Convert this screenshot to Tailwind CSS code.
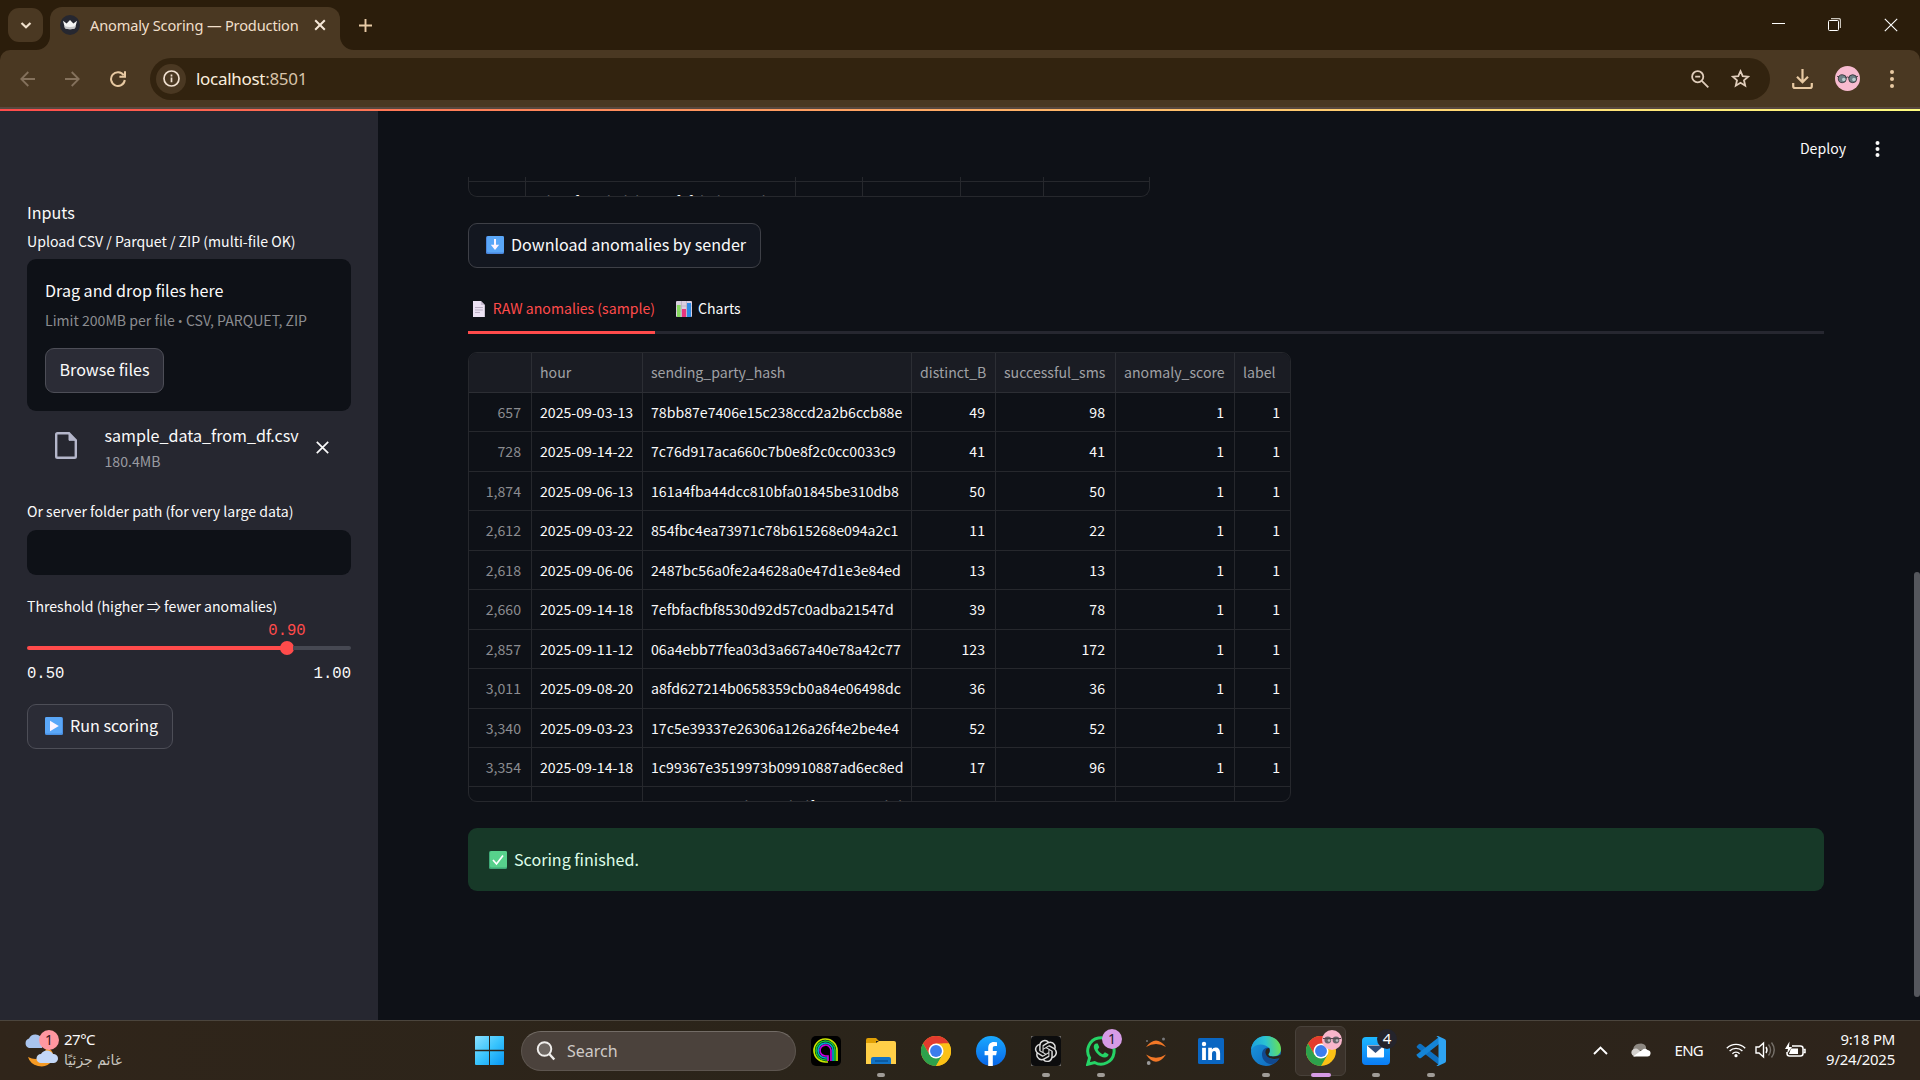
<!DOCTYPE html>
<html lang="en">
<head>
<meta charset="utf-8">
<title>Anomaly Scoring — Production</title>
<script src="https://cdn.jsdelivr.net/npm/@tailwindcss/browser@4"></script>
</head>
<body class="flex h-[1080px] w-[1920px] flex-col overflow-hidden bg-[#0e1117] font-['Noto_Sans_CJK_SC',sans-serif] whitespace-nowrap text-[#fafafa]">

<!-- Tab strip -->
<header class="flex h-[50px] shrink-0 bg-[#2b1d0b] pl-2 font-['Noto_Sans',sans-serif]">
  <div class="mt-2 flex h-[34px] w-[35px] items-center justify-center rounded-[11px] bg-[#4a3822]">
    <svg class="size-3" viewBox="0 0 12 12" fill="none" stroke="#f0e0cc" stroke-width="2.2"><path d="M1.5 4l4.5 4.300l4.500-4.300"/></svg>
  </div>
  <div class="relative mt-[7px] ml-[7px] flex h-[43px] w-[290px] items-center rounded-t-[12px] bg-[#4a3822] pb-[7px] pl-[10px]">
    <svg class="absolute bottom-0 -left-[14px] size-[14px]" viewBox="0 0 14 14"><path d="M14 0v14H0A14 14 0 0 0 14 0" fill="#4a3822"/></svg>
    <svg class="absolute -right-[14px] bottom-0 size-[14px]" viewBox="0 0 14 14"><path d="M0 0v14h14A14 14 0 0 1 0 0" fill="#4a3822"/></svg>
    <svg class="size-5" viewBox="0 0 20 20"><circle cx="10" cy="10" r="10" fill="#262730"/><path d="M3 5.800l3.600 2.700L10 5l3.400 3.500L17 5.800l-2 7.400q-5 2-10 0z" fill="#f4f4f4"/><path d="M4.300 11q5.700 2 11.400 0l-.7 2.200q-5 2-10 0z" fill="#c4c4c6"/></svg>
    <span class="mt-px ml-[10px] text-[14.600px] tracking-[-0.16px] text-[#f0dfca]">Anomaly Scoring — Production</span>
    <svg class="absolute top-3 right-[14px] size-3" viewBox="0 0 12 12" stroke="#f6e8d8" stroke-width="2"><path d="M1.200 1.200l9.600 9.600M10.800 1.200l-9.600 9.600"/></svg>
  </div>
  <svg class="mt-[19px] ml-[19px] size-[13px]" viewBox="0 0 13 13" stroke="#e8cba6" stroke-width="1.900"><path d="M6.500 0v13M0 6.500h13"/></svg>
  <div class="ml-auto flex items-start gap-[43px] pt-[18px] pr-[22px]">
    <svg class="h-[13px] w-[13px]" viewBox="0 0 13 13" stroke="#fff"><path d="M0 5.500h13"/></svg>
    <svg class="size-[13px]" viewBox="0 0 13 13" fill="none" stroke="#fff"><rect x=".5" y="2.500" width="10" height="10" rx="1"/><path d="M3 .5h7.500q2 0 2 2V10" stroke="#c9c3ba" stroke-width="1.300"/></svg>
    <svg class="size-[14px]" viewBox="0 0 14 14" stroke="#fff" stroke-width="1.100"><path d="M.8.8l12.400 12.400M13.200.8L.8 13.200"/></svg>
  </div>
</header>

<!-- Address bar -->
<div class="shrink-0 bg-[#2b1d0b]">
<nav class="flex h-[57px] items-center rounded-t-[10px] bg-[#4a3822] font-['Noto_Sans',sans-serif]">
  <svg class="ml-5 h-[16px] w-[15px]" viewBox="0 0 15 16" fill="none" stroke="#84715c" stroke-width="1.800"><path d="M15 8H1.500M8.300 1L1.300 8l7 7"/></svg>
  <svg class="ml-[30px] h-[16px] w-[15px]" viewBox="0 0 15 16" fill="none" stroke="#84715c" stroke-width="1.800"><path d="M0 8h13.500M6.700 1l7 7-7 7"/></svg>
  <svg class="ml-[30px] size-4" viewBox="0 0 16 16" fill="none" stroke="#e8c9a2" stroke-width="2"><path d="M13.700 4.200A6.900 6.900 0 1 0 14.800 9M15 .2v5.600H9.400"/></svg>
  <div class="ml-6 flex h-[42px] w-[1620px] items-center rounded-full bg-[#32230f] pl-[6px]">
    <div class="flex size-[30px] items-center justify-center rounded-full bg-[#4a3822]">
      <svg class="size-[17px]" viewBox="0 0 17 17" fill="none" stroke="#f0e0d0" stroke-width="1.700"><circle cx="8.500" cy="8.500" r="7.500"/><path d="M8.500 7.600v4.700M8.500 4.600v1.800"/></svg>
    </div>
    <span class="mt-px ml-[10px] text-[17px] tracking-[-0.3px] text-[#d8c3aa]"><span class="text-[#fbeede]">localhost</span>:8501</span>
    <svg class="ml-auto size-[18px]" viewBox="0 0 18 18" fill="none" stroke="#e0cdbb" stroke-width="1.800"><circle cx="6.700" cy="6.700" r="5.600"/><path d="M10.800 10.800l6.500 6.500M4.200 6.700h5"/></svg>
    <svg class="mr-[20px] ml-[22px] size-[19px]" viewBox="0 0 19 19" fill="none" stroke="#e0cdbb" stroke-width="1.800"><path d="M9.500 2.200l2.200 5 5.400.5-4.100 3.600 1.200 5.400-4.700-2.900-4.700 2.900L6 11.300 1.900 7.700l5.400-.5z"/></svg>
  </div>
  <svg class="ml-[22px] h-[22px] w-[21px]" viewBox="0 0 21 22" fill="none" stroke="#e8c9a2" stroke-width="2.200"><path d="M10.500 1v13M5 8.800l5.500 5.500L16 8.800M1.200 15v3.300q0 1.700 1.700 1.700h15.200q1.700 0 1.700-1.700V15"/></svg>
  <svg class="ml-[22px] size-[25px]" viewBox="0 0 25 25"><circle cx="12.500" cy="12.500" r="12.500" fill="#f8bbd0"/><g stroke="#2a2a2e" stroke-width=".8"><circle cx="7.300" cy="12.700" r="4" fill="#6f7f86"/><circle cx="17.700" cy="12.700" r="4" fill="#6f7f86"/><path d="M2 10.300l2 .6M23 10.300l-2 .6M11 11.500q1.500-1 3 0" fill="none"/></g><circle cx="8.800" cy="13.500" r="1.800" fill="#b9cccd"/><circle cx="19" cy="13.500" r="1.800" fill="#b9cccd"/></svg>
  <svg class="ml-[30px] h-[18px] w-1" viewBox="0 0 4 18" fill="#e8c9a2"><circle cx="2" cy="2" r="2"/><circle cx="2" cy="9" r="2"/><circle cx="2" cy="16" r="2"/></svg>
</nav>
</div>
<div class="h-[2px] shrink-0 bg-[#58483f]"></div>
<div class="h-[2px] shrink-0 bg-linear-to-r from-[#ff4b4b] to-[#fffd80]"></div>

<div class="flex h-[909px] shrink-0">
  <!-- Sidebar -->
  <aside class="w-[378px] shrink-0 bg-[#262730] px-[27px] pt-[87px]">
    <div class="h-[28px] text-[16.100px] leading-[28px]">Inputs</div>
    <div class="mt-[3px] h-[25px] text-[14.100px] leading-[25px]">Upload CSV / Parquet / ZIP (multi-file OK)</div>
    <div class="mt-[5px] h-[152px] rounded-[9px] bg-[#0e1117] px-[18px] pt-[18px]">
      <div class="h-[27px] text-[16.100px] leading-[27px]">Drag and drop files here</div>
      <div class="mt-[3px] h-[26px] text-[14.100px] leading-[26px] text-[#8b8c90]">Limit 200MB per file <span class="font-['Open_Sans',sans-serif] text-[13px]">•</span> CSV, PARQUET, ZIP</div>
      <div class="mt-[15px] flex h-[45px] w-[119px] items-center justify-center rounded-[9px] border border-[#4d4e57] bg-[#2b2c36] pb-[2px] text-[16.100px]">Browse files</div>
    </div>
    <div class="flex h-[66px] items-start pt-[11px] pl-[28px]">
      <svg class="mt-[10px] h-[27px] w-[22px]" viewBox="0 0 22 27" fill="none" stroke="#b4b6ca" stroke-width="2.400"><path d="M3 1.200h11l6.800 7v16.300q0 1.300-1.300 1.300H2.500q-1.300 0-1.300-1.300V2.500q0-1.300 1.300-1.300z"/><path d="M14 1.500v6.800h6.500z" fill="#b4b6ca" stroke-width="1"/></svg>
      <div class="ml-[27.500px] w-[195.500px]">
        <div class="h-[27px] text-[16.100px] leading-[27px]">sample_data_from_df.csv</div>
        <div class="h-[25px] text-[14.100px] leading-[25px] text-[#9a9ba1]">180.4MB</div>
      </div>
      <svg class="mt-[19px] ml-[16px] size-[13px]" viewBox="0 0 13 13" stroke="#fafafa" stroke-width="1.700"><path d="M.8.8l11.400 11.400M12.200.8L.8 12.200"/></svg>
    </div>
    <div class="mt-[22px] h-[25px] text-[14.100px] leading-[25px]">Or server folder path (for very large data)</div>
    <div class="mt-[6px] h-[45px] rounded-[9px] bg-[#0e1117]"></div>
    <div class="mt-[19px] h-[25px] text-[14.100px] leading-[25px]">Threshold (higher ⇒ fewer anomalies)</div>
    <div class="mt-[2px] flex h-[20px] justify-center pl-[196px] font-['Liberation_Mono',monospace] text-[15.600px] leading-[20px] text-[#ff4b4b]">0.90</div>
    <div class="flex h-[14px] items-center">
      <div class="h-1 w-[254px] rounded-l-full bg-[#ff4b4b]"></div>
      <div class="-ml-px size-[14px] rounded-full bg-[#ff4b4b]"></div>
      <div class="-ml-px h-1 flex-1 rounded-r-full bg-[#464852]"></div>
    </div>
    <div class="mt-[9px] flex h-[20px] justify-between font-['Liberation_Mono',monospace] text-[15.600px] leading-[20px]"><span>0.50</span><span>1.00</span></div>
    <div class="mt-[20px] flex h-[45px] w-[146px] items-center rounded-[9px] border border-[#4d4e57] bg-[#2b2c36] pl-[17px] text-[16.100px]">
      <svg class="mr-[7px] mb-px size-[18px]" viewBox="0 0 18 18"><rect width="18" height="18" rx="1.500" fill="#4a90e2"/><rect x="0" y="0" width="17" height="16.500" rx="1.500" fill="#5aa7f8"/><path d="M5 3.800v10.400L13.800 9z" fill="#fdf4ff"/></svg>
      <span class="pb-[2px]">Run scoring</span>
    </div>
  </aside>

  <!-- Main area -->
  <main class="relative flex-1">
    <div class="flex h-[66px] items-center justify-end pt-[9px] pr-[40px]">
      <span class="pb-px text-[14.100px] leading-6">Deploy</span>
      <svg class="mt-px ml-[29px] h-[16px] w-[5px]" viewBox="0 0 5 16" fill="#fafafa"><circle cx="2.500" cy="2" r="2"/><circle cx="2.500" cy="8" r="2"/><circle cx="2.500" cy="14" r="2"/></svg>
    </div>

    <div class="pr-[96px] pl-[90px]">
      <div class="h-[20px] w-[682px] overflow-hidden rounded-b-[9px] border border-t-0 border-[#26282d]">
        <div class="flex h-[4px]">
          <div class="w-[57px] border-r border-[#26282d]"></div><div class="w-[270px] border-r border-[#26282d]"></div><div class="w-[67px] border-r border-[#26282d]"></div><div class="w-[98px] border-r border-[#26282d]"></div><div class="w-[83px] border-r border-[#26282d]"></div>
        </div>
        <div class="flex h-[41px] border-t border-[#26282d] text-[14.100px] leading-[39px]">
          <div class="w-[57px] border-r border-[#26282d]"></div><div class="w-[270px] border-r border-[#26282d] pl-[8px]">6d123f547d8d1b49a7f0f5b2b8a92d03</div><div class="w-[67px] border-r border-[#26282d]"></div><div class="w-[98px] border-r border-[#26282d]"></div><div class="w-[83px] border-r border-[#26282d]"></div>
        </div>
      </div>

      <div class="mt-[26px] flex h-[45px] w-[293px] items-center rounded-[9px] border border-[#3e4047] bg-[#131720] pl-[17px] text-[16.100px]">
        <svg class="mr-[7px] mb-px size-[18px]" viewBox="0 0 18 18"><rect width="18" height="18" rx="1.500" fill="#4a86dc"/><rect y="0" x="1" width="17" height="16.500" rx="1.500" fill="#5aa7f8"/><path d="M9 3v8" stroke="#fdf4ff" stroke-width="2"/><path d="M4.800 8.800h8.400L9 14z" fill="#fdf4ff"/></svg>
        <span class="pb-[2px]">Download anomalies by sender</span>
      </div>

      <div class="mt-[18px] flex h-[48px] items-stretch border-b-3 border-[#262730] text-[14.100px]">
        <div class="-mb-[3px] flex w-[187px] items-center border-b-3 border-[#ff4b4b] pl-[5px] text-[#ff4b4b]">
          <svg class="mr-2 h-[16px] w-[12px]" viewBox="0 0 12 16"><path d="M0 0h8l4 4v12H0z" fill="#ece2f4"/><path d="M8 0v4h4z" fill="#c9bcd2"/><path d="M2 6.500h8M2 9h8M2 11.500h5" stroke="#b9adc2"/></svg>
          <span>RAW anomalies (sample)</span>
        </div>
        <div class="ml-[21px] flex items-center">
          <svg class="mr-[6px] size-4" viewBox="0 0 16 16"><rect width="16" height="16" rx="1" fill="#d9cfe0"/><path d="M0 5h16M0 10h16M5.500 0v16M10.500 0v16" stroke="#b5a9bd" stroke-width=".7"/><rect x="1" y="4" width="3.600" height="12" fill="#86d860"/><rect x="6" y="8" width="4" height="8" fill="#e8357f"/><rect x="11" y="2" width="4" height="14" fill="#2f8be6"/></svg>
          <span>Charts</span>
        </div>
      </div>

      <div class="mt-[18px] h-[450px] w-[823px] overflow-hidden rounded-[9px] border border-[#26282d] text-[14.130px]">
        <div class="grid h-[40px] grid-cols-[63px_111px_269px_84px_120px_119px_55px] border-b border-[#2c2e34] bg-[#1a1c23] leading-[38px] text-[#a0a1a5] *:border-r *:border-[#2c2e34] *:pl-2 *:last:border-r-0">
          <div></div><div>hour</div><div>sending_party_hash</div><div>distinct_B</div><div>successful_sms</div><div>anomaly_score</div><div>label</div>
        </div>
        <div id="rows"></div>
      </div>

      <div class="mt-[26px] flex h-[63px] items-center rounded-[9px] bg-[#173928] pl-[21px] text-[16.100px] text-[#dffde9]">
        <svg class="mr-[7px] size-[18px]" viewBox="0 0 18 18"><rect width="18" height="18" rx="1.500" fill="#3fa877"/><rect x="1" width="17" height="16.500" rx="1.500" fill="#57d18c"/><path d="M4 9l3.500 4L14 4.500" fill="none" stroke="#fff" stroke-width="1.700"/></svg>
        <span>Scoring finished.</span>
      </div>
    </div>
    <div class="absolute top-[461px] right-0 h-[425px] w-[6px] rounded-full bg-[#55575d]"></div>
  </main>
</div>

<!-- Taskbar -->
<footer class="flex h-[60px] shrink-0 items-center border-t border-[#4b453d] bg-linear-to-r from-[#30251a] via-[#2a241a] to-[#2e241b] font-['Noto_Sans',sans-serif]">
  <div class="flex w-[462px] items-center pb-[3px] pl-[24px]">
    <svg class="h-[38px] w-[36px]" viewBox="0 0 36 38"><path d="M22 17q10 4 6 14-5 7-14 5-8-2-10-9 8 4 13 0 5-4 5-10z" fill="#f59a24"/><path d="M5 18a5 5 0 0 1 0-9.500 7 7 0 0 1 13 1V18z" fill="#a9c4ee"/><path d="M17 33a4.500 4.500 0 0 1 0-9 7 7 0 0 1 12 0 4.500 4.500 0 0 1 1 9z" fill="#c3d7f7"/><circle cx="25" cy="10" r="10" fill="#ff97a0"/><text x="25" y="15" text-anchor="middle" font-family="Noto Sans" font-size="14" fill="#3a1418">1</text></svg>
    <div class="ml-[4px] pt-[2px]">
      <div class="h-[20px] text-[15px] leading-5 tracking-[-0.5px]">27°C</div>
      <div class="h-[22px] font-['DejaVu_Sans',sans-serif] text-[14px] leading-[22px] tracking-[-0.3px] text-[#c9c5bf]" dir="rtl">غائم جزئيًا</div>
    </div>
  </div>
  <div class="flex w-[55px] justify-center">
    <svg class="size-[29px]" viewBox="0 0 29 29"><defs><linearGradient id="win" x1="0" y1="0" x2="1" y2="1"><stop stop-color="#8be0ff"/><stop offset=".5" stop-color="#39c4fd"/><stop offset="1" stop-color="#0796f4"/></linearGradient></defs><path d="M1 0h13v13.800H0V1q0-1 1-1zM15 0h13q1 0 1 1v12.800H15zM0 15.200h14V29H1q-1 0-1-1zM15 15.200h14V28q0 1-1 1H15z" fill="url(#win)"/></svg>
  </div>
  <div class="ml-1 flex h-10 w-[275px] items-center rounded-full border border-[#5d554f] border-t-[#736c66] bg-[#4b423c] pl-[14px]">
    <svg class="size-[20px]" viewBox="0 0 20 20" fill="#6e6762" stroke="#f0eeec" stroke-width="1.900"><circle cx="8.500" cy="8" r="6.800"/><path d="M13.300 13l5 5.500" stroke-width="2.400"/></svg>
    <span class="ml-[11px] text-[16px] text-[#cfcbc7]">Search</span>
  </div>

  <div class="ml-[2px] grid grid-cols-[repeat(12,55px)] *:relative *:flex *:h-[50px] *:items-center *:justify-center">
    <div>
      <svg class="size-[30px]" viewBox="0 0 30 30" fill="none" stroke-width="1.700"><rect width="30" height="30" rx="5" fill="#000"/><path d="M26 25V14A11.500 11.500 0 1 0 15 26h2" stroke="#c8e600"/><path d="M24 25V14A9.500 9.500 0 1 0 15 24h2" stroke="#19c832"/><path d="M22 25V14A7.500 7.500 0 1 0 15 22h2" stroke="#00a8c8"/><path d="M20 25V14A5.500 5.500 0 1 0 15 20h2v5" stroke="#c800e0"/></svg>
    </div>
    <div>
      <svg class="size-[30px]" viewBox="0 0 30 30"><path d="M0 4q0-2 2-2h8l3 3h-3v6H0z" fill="#e0a005"/><path d="M0 7h10l3-2h15q2 0 2 2v21H0z" fill="#ffcf48"/><path d="M5 28v-5q0-2 2-2h16q2 0 2 2v5z" fill="#1173c7"/><path d="M9 25h13" stroke="#0a4a88" stroke-width="1.200"/></svg>
      <i class="absolute bottom-[-1px] h-1 w-2 rounded-full bg-[#a09c97]"></i>
    </div>
    <div>
      <svg class="size-[30px]" viewBox="0 0 48 48"><circle cx="24" cy="24" r="24" fill="#fbc116"/><path d="M3.200 12A24 24 0 0 1 44.800 12H24L13.600 30z" fill="#e33b2e"/><path d="M3.200 12A24 24 0 0 0 24 48l10.400-18H13.600z" fill="#2da14c"/><path d="M44.800 12A24 24 0 0 1 24 48l10.400-18V12z" fill="#fbc116"/><circle cx="24" cy="24" r="12" fill="#fff"/><circle cx="24" cy="24" r="9.500" fill="#3b7ded"/></svg>
    </div>
    <div>
      <svg class="size-[30px]" viewBox="0 0 30 30"><defs><linearGradient id="fb" x1="0" y1="0" x2="0" y2="1"><stop stop-color="#19a9ff"/><stop offset="1" stop-color="#0866e8"/></linearGradient></defs><circle cx="15" cy="15" r="15" fill="url(#fb)"/><path d="M12.200 30V19.300H8.600V15h3.600v-2.600C12.200 8.100 14.300 6 18 6q1.500 0 3 .3v3.600h-1.900c-1.700 0-2.300.9-2.300 2.300V15h4.100l-.8 4.300h-3.300V30z" fill="#fff"/></svg>
    </div>
    <div>
      <svg class="size-[30px]" viewBox="0 0 30 30"><rect width="30" height="30" fill="#6d6a67"/><rect width="30" height="30" rx="4" fill="#0c0c0d"/><g transform="translate(3.800 3.800) scale(.93)" fill="#dcdcdc"><path d="M22.2819 9.8211a5.9847 5.9847 0 0 0-.5157-4.9108 6.0462 6.0462 0 0 0-6.5098-2.9A6.0651 6.0651 0 0 0 4.9807 4.1818a5.9847 5.9847 0 0 0-3.9977 2.9 6.0462 6.0462 0 0 0 .7427 7.0966 5.98 5.98 0 0 0 .511 4.9107 6.051 6.051 0 0 0 6.5146 2.9001A5.9847 5.9847 0 0 0 13.2599 24a6.0557 6.0557 0 0 0 5.7718-4.2058 5.9894 5.9894 0 0 0 3.9977-2.9001 6.0557 6.0557 0 0 0-.7475-7.0729zm-9.022 12.6081a4.4755 4.4755 0 0 1-2.8764-1.0408l.1419-.0804 4.7783-2.7582a.7948.7948 0 0 0 .3927-.6813v-6.7369l2.02 1.1686a.071.071 0 0 1 .038.052v5.5826a4.504 4.504 0 0 1-4.4945 4.4944zm-9.6607-4.1254a4.4708 4.4708 0 0 1-.5346-3.0137l.142.0852 4.783 2.7582a.7712.7712 0 0 0 .7806 0l5.8428-3.3685v2.3324a.0804.0804 0 0 1-.0332.0615L9.74 19.9502a4.4992 4.4992 0 0 1-6.1408-1.6464zM2.3408 7.8956a4.485 4.485 0 0 1 2.3655-1.9728V11.6a.7664.7664 0 0 0 .3879.6765l5.8144 3.3543-2.0201 1.1685a.0757.0757 0 0 1-.071 0l-4.8303-2.7865A4.504 4.504 0 0 1 2.3408 7.872zm16.5963 3.8558L13.1038 8.364 15.1192 7.2a.0757.0757 0 0 1 .071 0l4.8303 2.7913a4.4944 4.4944 0 0 1-.6765 8.1042v-5.6772a.79.79 0 0 0-.407-.667zm2.0107-3.0231l-.142-.0852-4.7735-2.7818a.7759.7759 0 0 0-.7854 0L9.409 9.2297V6.8974a.0662.0662 0 0 1 .0284-.0615l4.8303-2.7866a4.4992 4.4992 0 0 1 6.6802 4.66zM8.3065 12.863l-2.02-1.1638a.0804.0804 0 0 1-.038-.0567V6.0742a4.4992 4.4992 0 0 1 7.3757-3.4537l-.142.0805L8.704 5.459a.7948.7948 0 0 0-.3927.6813zm1.0976-2.3654l2.602-1.4998 2.6069 1.4998v2.9994l-2.5974 1.4997-2.6067-1.4997Z"/></g></svg>
      <i class="absolute bottom-[-1px] h-1 w-2 rounded-full bg-[#a09c97]"></i>
    </div>
    <div>
      <svg class="size-[30px]" viewBox="0 0 30 30" fill="none"><path d="M1.700 28.300l1.900-6.600A13.200 13.200 0 1 1 8.600 26.500z" stroke="#25d366" stroke-width="3"/><path d="M10.300 7.500c-1.300 0-2.800 1.600-2.500 3.700.6 4.800 6.200 10 10.800 10.300 2.200.1 4.200-1.500 3.900-3.300l-3.600-1.900-2 2c-2.200-.8-4.500-3-5.200-4.900l1.600-2.100-1.600-3.700z" fill="#25d366"/></svg>
      <b class="absolute top-[3px] right-[6px] flex size-5 items-center justify-center rounded-full bg-[#d69be6] text-[14px] font-normal text-[#241a2a]">1</b>
      <i class="absolute bottom-[-1px] h-1 w-2 rounded-full bg-[#a09c97]"></i>
    </div>
    <div>
      <svg class="h-[28px] w-[22px]" viewBox="0 0 22 28"><path d="M1 10Q11-3 21 10 11 4 1 10zM1 17.500Q11 32 21 17.500 11 24 1 17.500z" fill="#f37726"/><circle cx="18.500" cy="2" r="1.500" fill="#77777a"/><circle cx="2" cy="4" r="1" fill="#77777a"/><circle cx="3.700" cy="26" r="1.900" fill="#9a9a9b"/></svg>
    </div>
    <div>
      <svg class="size-[26px]" viewBox="0 0 26 26"><rect width="26" height="26" rx="1.500" fill="#0a66c2"/><g fill="#fff"><circle cx="6" cy="6" r="2.200"/><rect x="4.100" y="9.800" width="3.800" height="12.200"/><path d="M10.200 9.800h3.700v1.700q1.200-2 3.800-2 4.400 0 4.400 5.600V22h-3.900v-6.200q0-2.900-2-2.900-2.200 0-2.200 2.900V22h-3.800z"/></g></svg>
    </div>
    <div>
      <svg class="size-[30px]" viewBox="0 0 30 30"><defs><linearGradient id="eg" x1="0" y1=".5" x2="1" y2=".4"><stop stop-color="#1ba0e0"/><stop offset=".5" stop-color="#2bc3d2"/><stop offset="1" stop-color="#6be04f"/></linearGradient><linearGradient id="eb" x1="0" y1="0" x2="1" y2="1"><stop stop-color="#1a9be0"/><stop offset="1" stop-color="#0f62b8"/></linearGradient></defs><circle cx="15" cy="15" r="15" fill="url(#eb)"/><path d="M0 14C1 5 7 0 15 0c9 0 15 6 15 13 0 5-4 7.500-8 7.500-3 0-5-1.200-4.500-2.500 1.500-1.700 1.700-4 .3-6C14 7 4 7 0 14z" fill="url(#eg)"/><path d="M18.500 12c-4-1.500-8 2-7.500 7 .4 6 6 10 11 9 3-1 5-3.200 6.500-6-6 3-12 .5-11.500-3.500.5-2.500 2.500-3 1.500-6.500z" fill="#11498f"/><path d="M17.500 18c1.500-1.700 1.700-4 .3-6-2 .5-3.800 2-3.300 5 .5 3.500 4 6 9 6 3 0 5.500-1 6-2l.8-3c-2 1.800-5 2.500-8.300 2.500-3 0-5-1.200-4.500-2.500z" fill="#2a241a"/></svg>
      <i class="absolute bottom-[-1px] h-1 w-2 rounded-full bg-[#a09c97]"></i>
    </div>
    <div>
      <div class="absolute inset-x-[2px] inset-y-0 rounded-md border border-[#48413a] bg-[#3a3129]"></div>
      <svg class="relative size-[30px]" viewBox="0 0 48 48"><circle cx="24" cy="24" r="24" fill="#fbc116"/><path d="M3.200 12A24 24 0 0 1 44.800 12H24L13.600 30z" fill="#e33b2e"/><path d="M3.200 12A24 24 0 0 0 24 48l10.400-18H13.600z" fill="#2da14c"/><circle cx="24" cy="24" r="12" fill="#fff"/><circle cx="24" cy="24" r="9.500" fill="#3b7ded"/></svg>
      <svg class="absolute top-[4px] right-[6px] size-5" viewBox="0 0 20 20"><circle cx="10" cy="10" r="10" fill="#f8b5cb"/><circle cx="5.800" cy="10" r="3.400" fill="#68636a"/><circle cx="14" cy="10" r="3.400" fill="#68636a"/><path d="M1 8.500h18" stroke="#54484f"/><circle cx="7" cy="10.500" r="1.300" fill="#b7b9bb"/><circle cx="15" cy="10.500" r="1.300" fill="#b7b9bb"/></svg>
      <i class="absolute bottom-[-1px] h-1 w-5 rounded-full bg-[#d69be6]"></i>
    </div>
    <div>
      <svg class="size-7" viewBox="0 0 28 28"><defs><linearGradient id="ml" x1="0" y1="0" x2="0" y2="1"><stop stop-color="#1db8ff"/><stop offset="1" stop-color="#0a7cf5"/></linearGradient></defs><rect width="28" height="28" rx="4" fill="url(#ml)"/><rect x="5" y="8" width="17" height="12.500" rx="1" fill="#fff"/><path d="M5 8.500l8.500 7.500L22 8.500z" fill="#2f4d7a"/></svg>
      <b class="absolute top-[3px] right-[6px] flex size-5 items-center justify-center rounded-full bg-[#24242c] text-[15px] font-normal text-white">4</b>
      <i class="absolute bottom-[-1px] h-1 w-2 rounded-full bg-[#a09c97]"></i>
    </div>
    <div>
      <svg class="size-[30px]" viewBox="0 0 30 30"><path d="M1 10l2-2q1-.7 2 0l18 14v7L1 11.700q-.8-.9 0-1.700z" fill="#0e70c0"/><path d="M1 20l2 2q1 .7 2 0L23 8V1L1 18.300q-.8.900 0 1.700z" fill="#1484d6"/><path d="M22 0l6.500 3Q30 3.700 30 5v20q0 1.300-1.500 2L22 30q-1.200 0-1.500-1 2 .5 2-1.500V2.500q0-2-2-1.500.3-1 1.500-1z" fill="#2ea3f2"/></svg>
      <i class="absolute bottom-[-1px] h-1 w-2 rounded-full bg-[#a09c97]"></i>
    </div>
  </div>

  <div class="ml-auto flex items-center pr-[25px] pb-px">
    <svg class="h-[9px] w-[15px]" viewBox="0 0 15 9" fill="none" stroke="#fff" stroke-width="1.900"><path d="M1 8l6.500-6.500L14 8"/></svg>
    <svg class="mr-[24px] ml-[22px] h-[14px] w-[21px]" viewBox="0 0 21 14"><path d="M4 9A5.500 5.500 0 0 1 9 .8q3.500-1.200 6 1.200 1.500 2 1 4z" fill="#8d8882"/><path d="M4.500 13.500A4 4 0 0 1 3.500 6q3-1.500 5 .7L14 10.500z" fill="#d3d0cd"/><path d="M3 13.500L12 7q3-2.700 5.500 0Q21 7.500 20.500 11q-.5 2.500-3 2.500z" fill="#fff"/></svg>
    <span class="text-[15px] tracking-[-0.7px]">ENG</span>
    <svg class="ml-[23px] h-[16px] w-[20px]" viewBox="0 0 20 16" fill="none" stroke="#fff" stroke-width="1.400"><path d="M.8 6.200a13 13 0 0 1 18.400 0M3.600 9a9 9 0 0 1 12.800 0M6.400 11.700a5 5 0 0 1 7.200 0"/><circle cx="10" cy="13.700" r="1.600" fill="#fff" stroke="none"/></svg>
    <svg class="ml-[9px] h-[18px] w-[21px]" viewBox="0 0 21 18" fill="none" stroke="#fff" stroke-width="1.400"><path d="M1 6h3l4.500-4v14L4 12H1z"/><path d="M11 6q2 3 0 6"/><path d="M13.500 3.500q4 5.500 0 11M16.500 1.500q5.500 7.500 0 15" stroke="#76706a"/></svg>
    <svg class="ml-[9px] h-[18px] w-[21px]" viewBox="0 0 21 18" fill="none" stroke="#fff" stroke-width="1.500"><path d="M7 5h8.500q2.500 0 2.500 2.500v5q0 2.500-2.500 2.500h-11Q2 15 2 12.500V11"/><path d="M18.500 8.500H20v3h-1.500"/><path d="M6 7.500h7v5.500H4z" fill="#fff" stroke="none"/><path d="M4.500.5L0 8h3l-1 5 5-7H4z" fill="#fff" stroke="none"/></svg>
    <div class="mb-[3px] ml-[20px] text-right text-[14.900px] leading-5 tracking-[-0.2px]"><div>9:18 PM</div><div>9/24/2025</div></div>
  </div>
</footer>

<script>
const data = [
  ["657","2025-09-03-13","78bb87e7406e15c238ccd2a2b6ccb88e",49,98],
  ["728","2025-09-14-22","7c76d917aca660c7b0e8f2c0cc0033c9",41,41],
  ["1,874","2025-09-06-13","161a4fba44dcc810bfa01845be310db8",50,50],
  ["2,612","2025-09-03-22","854fbc4ea73971c78b615268e094a2c1",11,22],
  ["2,618","2025-09-06-06","2487bc56a0fe2a4628a0e47d1e3e84ed",13,13],
  ["2,660","2025-09-14-18","7efbfacfbf8530d92d57c0adba21547d",39,78],
  ["2,857","2025-09-11-12","06a4ebb77fea03d3a667a40e78a42c77",123,172],
  ["3,011","2025-09-08-20","a8fd627214b0658359cb0a84e06498dc",36,36],
  ["3,340","2025-09-03-23","17c5e39337e26306a126a26f4e2be4e4",52,52],
  ["3,354","2025-09-14-18","1c99367e3519973b09910887ad6ec8ed",17,96],
  ["","","3719e02a5c41b06c8d2df4a7310e95bd","",""]
];
document.getElementById("rows").innerHTML = data.map(([i, h, s, d, n]) => {
  const one = h ? "1" : "";
  return `<div class="grid h-[39.450px] grid-cols-[63px_111px_269px_84px_120px_119px_55px] border-b border-[#26282d] leading-[39px] *:border-r *:border-[#26282d] *:pr-[10px] *:pl-2 *:last:border-r-0">
    <div class="text-right"><span class="text-[#8b8c90]">${i}</span></div><div>${h}</div><div>${s}</div>
    <div class="text-right">${d}</div><div class="text-right">${n}</div><div class="text-right">${one}</div><div class="text-right">${one}</div></div>`;
}).join("");
</script>
</body>
</html>
